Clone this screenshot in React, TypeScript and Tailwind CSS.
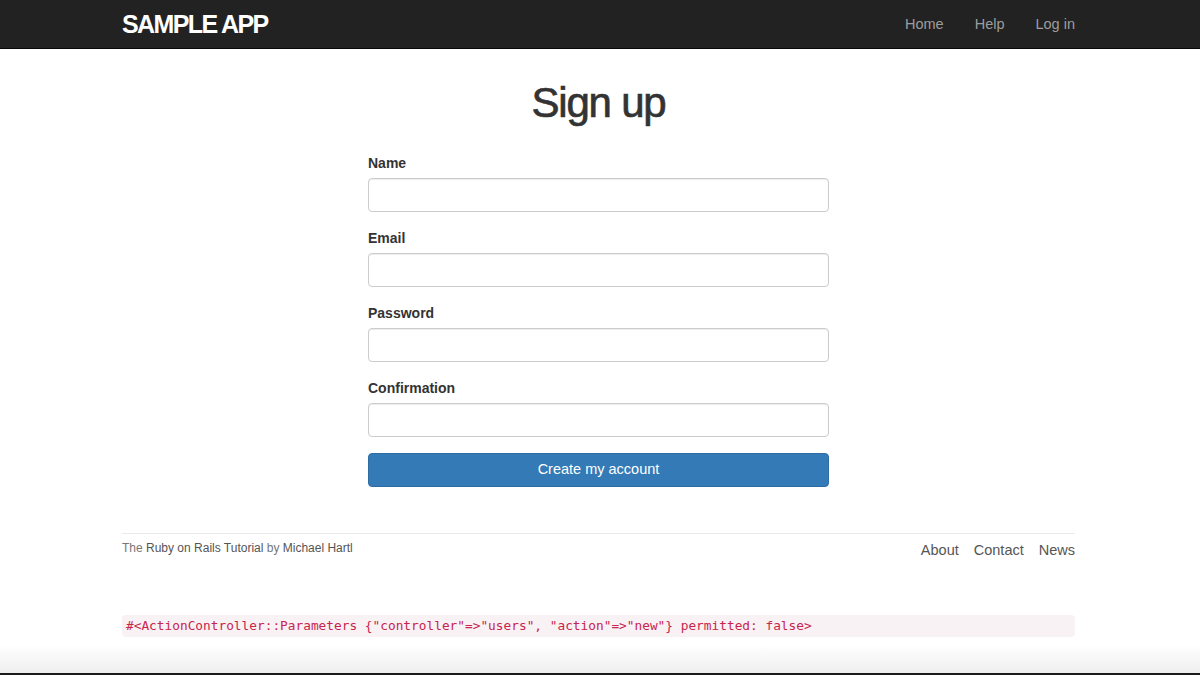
import React from "react";

const fields = ["Name", "Email", "Password", "Confirmation"];

const Header = () => {
  return (
    <div className="h-[49px] bg-[#222222] border-b border-[#080808]">
      <div className="ml-[122px] w-[953px] h-full flex items-center justify-between">
        <span className="text-white font-bold uppercase text-[25px] tracking-[-1.6px] leading-none">
          sample app
        </span>
        <nav className="flex gap-[31px] text-[14.5px] text-[#9d9d9d] pt-[1px]">
          <a href="#">Home</a>
          <a href="#">Help</a>
          <a href="#">Log in</a>
        </nav>
      </div>
    </div>
  );
};

const SignupForm = () => {
  return (
    <div className="w-[461px] mx-auto">
      {fields.map((f) => (
        <div key={f} className="mb-[16px]">
          <label className="block h-[20px] leading-[20px] mb-[5px] text-[14px] font-bold text-[#333333]">
            {f}
          </label>
          <input
            type={f === "Password" || f === "Confirmation" ? "password" : "text"}
            className="block w-full h-[34px] rounded-[4px] border border-[#cccccc] bg-white shadow-[inset_0_1px_1px_rgba(0,0,0,0.075)] outline-none"
          />
        </div>
      ))}
      <button className="block w-full h-[34px] rounded-[4px] bg-[#337ab7] border border-[#2e6da4] text-white text-[14.5px]">
        Create my account
      </button>
    </div>
  );
};

export default function App() {
  return (
    <div
      className="h-[675px] flex flex-col overflow-hidden bg-white"
      style={{ fontFamily: '"Liberation Sans", Arial, sans-serif' }}
    >
      <Header />
      <div className="ml-[122px] w-[953px] flex-1 flex flex-col">
        <h1 className="mt-[31px] h-[46px] leading-[46px] text-center text-[42px] tracking-[-1.2px] text-[#333333] [-webkit-text-stroke:0.7px_#333333]">
          Sign up
        </h1>
        <div className="mt-[27px]">
          <SignupForm />
        </div>
        <footer className="mt-[46px] border-t border-[#eaeaea] pt-[6px] flex justify-between">
          <small className="text-[12px] text-[#777777] leading-[16px]">
            The <a href="#" className="text-[#555555]">Ruby on Rails Tutorial</a> by{" "}
            <a href="#" className="text-[#555555]">Michael Hartl</a>
          </small>
          <ul className="flex gap-[15px] text-[14.5px] text-[#555555] leading-[20px]">
            <li>About</li>
            <li>Contact</li>
            <li>News</li>
          </ul>
        </footer>
        <pre
          className="mt-[55px] h-[22px] leading-[22px] px-[4px] rounded-[4px] bg-[#f9f2f4] text-[#c7254e] text-[12.8px]"
          style={{ fontFamily: '"DejaVu Sans Mono", monospace' }}
        >
          {'#<ActionController::Parameters {"controller"=>"users", "action"=>"new"} permitted: false>'}
        </pre>
      </div>
      <div className="h-[28px] bg-gradient-to-b from-white to-[#eeeeee]" />
      <div className="h-[2px] bg-[#1a1a1a]" />
    </div>
  );
}
